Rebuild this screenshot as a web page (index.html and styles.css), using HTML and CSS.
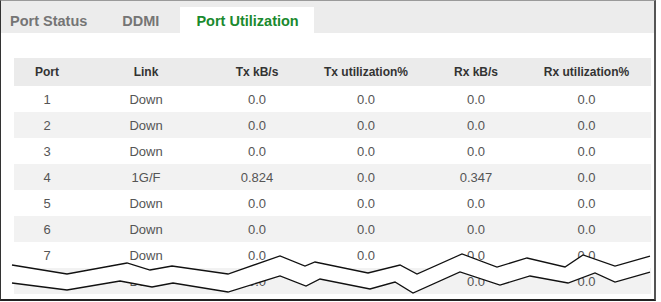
FILE: index.html
```html
<!DOCTYPE html>
<html lang="en">
<head>
  <meta charset="UTF-8">
  <title>Port Utilization</title>
  <link rel="stylesheet" href="styles.css">
</head>
<body>
  <div class="frame">
    <div class="tabs">
      <div class="tab first">Port Status</div>
      <div class="tab">DDMI</div>
      <div class="tab active">Port Utilization</div>
    </div>

    <div class="content">
      <table class="util">
        <colgroup>
          <col class="c-port">
          <col class="c-link">
          <col class="c-tx">
          <col class="c-txu">
          <col class="c-rx">
          <col class="c-rxu">
        </colgroup>
        <thead>
          <tr><th>Port</th><th>Link</th><th>Tx kB/s</th><th>Tx utilization%</th><th>Rx kB/s</th><th>Rx utilization%</th></tr>
        </thead>
        <tbody>
          <tr><td>1</td><td>Down</td><td>0.0</td><td>0.0</td><td>0.0</td><td>0.0</td></tr>
          <tr><td>2</td><td>Down</td><td>0.0</td><td>0.0</td><td>0.0</td><td>0.0</td></tr>
          <tr><td>3</td><td>Down</td><td>0.0</td><td>0.0</td><td>0.0</td><td>0.0</td></tr>
          <tr><td>4</td><td>1G/F</td><td>0.824</td><td>0.0</td><td>0.347</td><td>0.0</td></tr>
          <tr><td>5</td><td>Down</td><td>0.0</td><td>0.0</td><td>0.0</td><td>0.0</td></tr>
          <tr><td>6</td><td>Down</td><td>0.0</td><td>0.0</td><td>0.0</td><td>0.0</td></tr>
          <tr><td>7</td><td>Down</td><td>0.0</td><td>0.0</td><td>0.0</td><td>0.0</td></tr>
          <tr><td>8</td><td>Down</td><td>0.0</td><td>0.0</td><td>0.0</td><td>0.0</td></tr>
        </tbody>
      </table>
    </div>

    <!-- torn edge over the cut-off rows -->
    <svg class="tear" width="656" height="302" viewBox="0 0 656 302">
      <polygon fill="#fff" points="12,265 67,274 127,263 150,270 172,266 228,274 280,256 305,266 315,262 368,273 400,265 417,274 462,254 497,267 527,258 565,267 583,255 615,266 650,256 650,272 615,282 595,273 568,283 530,276 500,285 460,272 413,293 395,282 370,289 320,279 306,286 280,276 228,292 173,283 152,287 120,281 67,290 12,283"/>
      <polyline fill="none" stroke="#111" stroke-width="1.3" points="12,265 67,274 127,263 150,270 172,266 228,274 280,256 305,266 315,262 368,273 400,265 417,274 462,254 497,267 527,258 565,267 583,255 615,266 650,256"/>
      <polyline fill="none" stroke="#111" stroke-width="1.3" points="12,283 67,290 120,281 152,287 173,283 228,292 280,276 306,286 320,279 370,289 395,282 413,293 460,272 500,285 530,276 568,283 595,273 615,282 650,272"/>
    </svg>
  </div>
</body>
</html>
```

FILE: styles.css
```css
body {
  margin: 0;
  background: #fff;
  font-family: "Liberation Sans", Arial, sans-serif;
}
.frame {
  position: relative;
  width: 656px;
  height: 301px;
  box-sizing: border-box;
  border-top: 1px solid #9a9a9a;
  border-left: 1px solid #333;
  border-right: 2px solid #555;
  border-bottom: 2px solid #222;
  overflow: hidden;
}
.tabs {
  display: flex;
  align-items: flex-end;
  gap: 3px;
  height: 32px;
  padding-top: 6px;
  box-sizing: border-box;
  background: #ececec;
}
.tab {
  height: 24px;
  line-height: 24px;
  padding: 2px 16px 0;
  font-size: 14.5px;
  font-weight: bold;
  color: #757575;
}
.tab.first {
  padding-left: 9px;
}
.tab.active {
  margin-left: 2px;
  padding-right: 15px;
  background: #fff;
  color: #1a8a2e;
}
.content {
  padding: 25px 3px 0 13px;
}
.util {
  width: 637px;
  table-layout: fixed;
  border-collapse: collapse;
}
.c-port { width: 66px; }
.c-link { width: 132px; }
.c-tx { width: 90px; }
.c-txu { width: 128px; }
.c-rx { width: 92px; }
.c-rxu { width: 129px; }
.util th {
  height: 28px;
  padding: 0;
  background: #ebebeb;
  color: #333;
  font-size: 12px;
  font-weight: bold;
  text-align: center;
}
.util td {
  height: 26px;
  padding: 0;
  color: #555;
  font-size: 13px;
  text-align: center;
}
.util tbody tr:nth-child(even) td {
  background: #f2f2f2;
}
.tear {
  position: absolute;
  left: -1px;
  top: -1px;
}
```
